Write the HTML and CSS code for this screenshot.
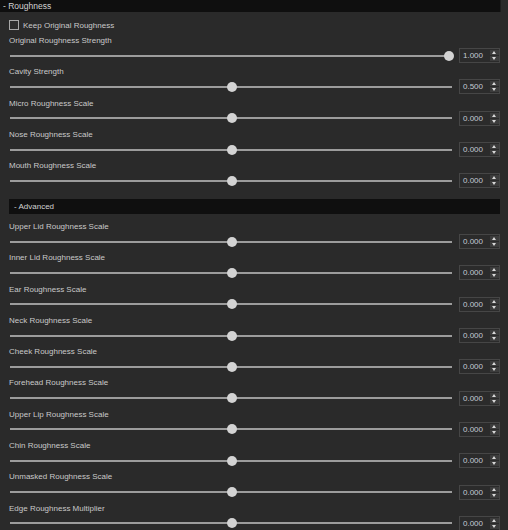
FILE: index.html
```html
<!DOCTYPE html>
<html>
<head>
<meta charset="utf-8">
<link rel="stylesheet" href="styles.css">
</head>
<body>
<div class="panel">
  <div class="group-title">- Roughness</div>
  <div class="section">
    <label class="check-row"><span class="checkbox"></span><span>Keep Original Roughness</span></label>

    <div class="field">
      <div class="label">Original Roughness Strength</div>
      <div class="control">
        <div class="slider"><div class="track"></div><div class="knob" style="--v:1"></div></div>
        <div class="spin"><span class="value">1.000</span><span class="arrows"><span class="up"></span><span class="down"></span></span></div>
      </div>
    </div>
    <div class="field">
      <div class="label">Cavity Strength</div>
      <div class="control">
        <div class="slider"><div class="track"></div><div class="knob" style="--v:0.5"></div></div>
        <div class="spin"><span class="value">0.500</span><span class="arrows"><span class="up"></span><span class="down"></span></span></div>
      </div>
    </div>
    <div class="field">
      <div class="label">Micro Roughness Scale</div>
      <div class="control">
        <div class="slider"><div class="track"></div><div class="knob" style="--v:0.5"></div></div>
        <div class="spin"><span class="value">0.000</span><span class="arrows"><span class="up"></span><span class="down"></span></span></div>
      </div>
    </div>
    <div class="field">
      <div class="label">Nose Roughness Scale</div>
      <div class="control">
        <div class="slider"><div class="track"></div><div class="knob" style="--v:0.5"></div></div>
        <div class="spin"><span class="value">0.000</span><span class="arrows"><span class="up"></span><span class="down"></span></span></div>
      </div>
    </div>
    <div class="field">
      <div class="label">Mouth Roughness Scale</div>
      <div class="control">
        <div class="slider"><div class="track"></div><div class="knob" style="--v:0.5"></div></div>
        <div class="spin"><span class="value">0.000</span><span class="arrows"><span class="up"></span><span class="down"></span></span></div>
      </div>
    </div>

    <div class="sub-title">- Advanced</div>

    <div class="field">
      <div class="label">Upper Lid Roughness Scale</div>
      <div class="control">
        <div class="slider"><div class="track"></div><div class="knob" style="--v:0.5"></div></div>
        <div class="spin"><span class="value">0.000</span><span class="arrows"><span class="up"></span><span class="down"></span></span></div>
      </div>
    </div>
    <div class="field">
      <div class="label">Inner Lid Roughness Scale</div>
      <div class="control">
        <div class="slider"><div class="track"></div><div class="knob" style="--v:0.5"></div></div>
        <div class="spin"><span class="value">0.000</span><span class="arrows"><span class="up"></span><span class="down"></span></span></div>
      </div>
    </div>
    <div class="field">
      <div class="label">Ear Roughness Scale</div>
      <div class="control">
        <div class="slider"><div class="track"></div><div class="knob" style="--v:0.5"></div></div>
        <div class="spin"><span class="value">0.000</span><span class="arrows"><span class="up"></span><span class="down"></span></span></div>
      </div>
    </div>
    <div class="field">
      <div class="label">Neck Roughness Scale</div>
      <div class="control">
        <div class="slider"><div class="track"></div><div class="knob" style="--v:0.5"></div></div>
        <div class="spin"><span class="value">0.000</span><span class="arrows"><span class="up"></span><span class="down"></span></span></div>
      </div>
    </div>
    <div class="field">
      <div class="label">Cheek Roughness Scale</div>
      <div class="control">
        <div class="slider"><div class="track"></div><div class="knob" style="--v:0.5"></div></div>
        <div class="spin"><span class="value">0.000</span><span class="arrows"><span class="up"></span><span class="down"></span></span></div>
      </div>
    </div>
    <div class="field">
      <div class="label">Forehead Roughness Scale</div>
      <div class="control">
        <div class="slider"><div class="track"></div><div class="knob" style="--v:0.5"></div></div>
        <div class="spin"><span class="value">0.000</span><span class="arrows"><span class="up"></span><span class="down"></span></span></div>
      </div>
    </div>
    <div class="field">
      <div class="label">Upper Lip Roughness Scale</div>
      <div class="control">
        <div class="slider"><div class="track"></div><div class="knob" style="--v:0.5"></div></div>
        <div class="spin"><span class="value">0.000</span><span class="arrows"><span class="up"></span><span class="down"></span></span></div>
      </div>
    </div>
    <div class="field">
      <div class="label">Chin Roughness Scale</div>
      <div class="control">
        <div class="slider"><div class="track"></div><div class="knob" style="--v:0.5"></div></div>
        <div class="spin"><span class="value">0.000</span><span class="arrows"><span class="up"></span><span class="down"></span></span></div>
      </div>
    </div>
    <div class="field">
      <div class="label">Unmasked Roughness Scale</div>
      <div class="control">
        <div class="slider"><div class="track"></div><div class="knob" style="--v:0.5"></div></div>
        <div class="spin"><span class="value">0.000</span><span class="arrows"><span class="up"></span><span class="down"></span></span></div>
      </div>
    </div>
    <div class="field">
      <div class="label">Edge Roughness Multiplier</div>
      <div class="control">
        <div class="slider"><div class="track"></div><div class="knob" style="--v:0.5"></div></div>
        <div class="spin"><span class="value">0.000</span><span class="arrows"><span class="up"></span><span class="down"></span></span></div>
      </div>
    </div>
  </div>
</div>
</body>
</html>
```
FILE: styles.css
```css
html, body {
  margin: 0;
  padding: 0;
  background: #2a2a2a;
  overflow: hidden;
}

.panel {
  width: 508px;
  font-family: "Liberation Sans", Arial, sans-serif;
  font-size: 8px;
  color: #c9c9c9;
}

.group-title {
  width: 497px;
  height: 12px;
  line-height: 12px;
  padding-left: 3px;
  background: #0f0f0f;
  border-right: 1px solid #1c1c1c;
  color: #d2d2d2;
  font-size: 8.5px;
}

.section {
  padding: 0 8px 0 9px;
}

.check-row {
  display: flex;
  align-items: center;
  gap: 4px;
  height: 14px;
  margin-top: 6px;
}

.checkbox {
  width: 8px;
  height: 8px;
  border: 1px solid #a8a8a8;
  background: #2c2c2c;
}

.field {
  height: 31.3px;
}

.label {
  height: 15px;
  padding-top: 1px;
  line-height: 16px;
}

.control {
  display: flex;
  align-items: center;
  gap: 7px;
  height: 15.3px;
}

.slider {
  position: relative;
  flex: 1;
  margin-left: 1px;
  height: 10px;
}

.track {
  position: absolute;
  left: 0;
  right: 0;
  top: 4px;
  height: 2px;
  background: #9c9c9c;
}

.knob {
  position: absolute;
  top: 0;
  left: calc(var(--v) * (100% - 8px));
  width: 10px;
  height: 10px;
  border-radius: 50%;
  background: #d3d3d3;
}

.spin {
  display: flex;
  width: 41px;
  height: 15px;
  box-sizing: border-box;
  border: 1px solid #464646;
  background: #2b2b2b;
}

.value {
  flex: 1;
  line-height: 13px;
  padding-left: 3px;
  color: #c3cad4;
}

.arrows {
  display: flex;
  flex-direction: column;
  justify-content: space-between;
  width: 9px;
  padding: 1px 0;
}

.arrows span {
  height: 5px;
  background: #3c3c3c;
  position: relative;
}

.arrows .up::after,
.arrows .down::after {
  content: "";
  position: absolute;
  left: 2px;
  width: 0;
  height: 0;
  border-left: 2.5px solid transparent;
  border-right: 2.5px solid transparent;
}

.arrows .up::after {
  top: 1px;
  border-bottom: 3px solid #d8d8d8;
}

.arrows .down::after {
  top: 1px;
  border-top: 3px solid #d8d8d8;
}

.sub-title {
  height: 15px;
  line-height: 15px;
  margin-top: 10.5px;
  margin-bottom: 4px;
  padding-left: 5px;
  background: #0f0f0f;
  color: #d2d2d2;
}
```
